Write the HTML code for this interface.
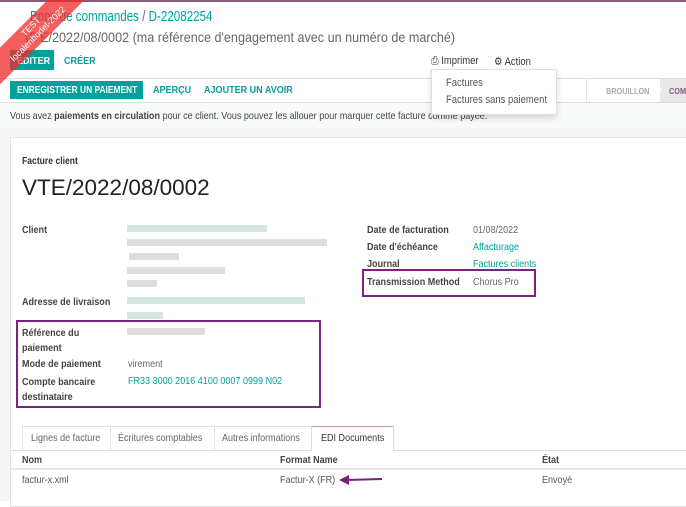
<!DOCTYPE html>
<html><head><meta charset="utf-8"><style>
*{margin:0;padding:0;box-sizing:border-box}
body{width:686px;height:501px;overflow:hidden;background:#fff;font-family:"Liberation Sans",sans-serif;color:#4c4c4c;position:relative;font-size:11px}
.a{position:absolute;white-space:nowrap}
.s{transform:scaleX(.86);transform-origin:0 0}
.t{color:#00A09D}
.b{font-weight:bold;color:#444}
.blur{position:absolute;height:7px;background:#c9dedd;opacity:.8}
.blg{position:absolute;height:7px;background:#ddd}
.btn{position:absolute;background:#00A09D}
</style></head><body>
<div class="a" style="left:0;top:0;width:686px;height:2px;background:#875A7B"></div>
<div class="a" style="left:30px;top:9px;font-size:14.5px;transform:scaleX(.8);transform-origin:0 0"><span class="t">Bons de commandes</span> <span style="color:#666">/</span> <span class="t">D-22082254</span></div>
<div class="a" style="left:24px;top:29px;font-size:14px;color:#666;transform:scaleX(.9);transform-origin:0 0">VTE/2022/08/0002 (ma référence d'engagement avec un numéro de marché)</div>
<div class="btn" style="left:10px;top:50px;width:44px;height:20px"></div>
<div class="a s" style="left:17px;top:55px;font-weight:bold;font-size:10.5px;color:#fff">EDITER</div>
<div class="a t s" style="left:64px;top:55px;font-weight:bold;font-size:10.5px">CRÉER</div>
<div class="a s" style="left:431px;top:55px;font-size:11px;color:#333">&#9113; Imprimer</div>
<div class="a s" style="left:494px;top:55px;font-size:11px;color:#333">&#9881; Action</div>
<div class="a" style="left:0;top:78px;width:686px;height:1px;background:#ddd"></div>
<div class="a" style="left:0;top:102px;width:686px;height:1px;background:#ddd"></div>
<div class="btn" style="left:10px;top:81px;width:133px;height:18px"></div>
<div class="a" style="left:17px;top:84px;font-weight:bold;font-size:10.5px;color:#fff;transform:scaleX(.8);transform-origin:0 0">ENREGISTRER UN PAIEMENT</div>
<div class="a t s" style="left:153px;top:84px;font-weight:bold;font-size:10.5px">APERÇU</div>
<div class="a t s" style="left:204px;top:84px;font-weight:bold;font-size:10.5px">AJOUTER UN AVOIR</div>
<div class="a" style="left:586px;top:79px;width:1px;height:23px;background:#e4e4e4"></div>
<div class="a s" style="left:606px;top:86px;font-size:8.5px;color:#aaa;font-weight:bold">BROUILLON</div>
<div class="a" style="left:660px;top:79px;width:30px;height:23px;background:#e9e9e9"></div>
<div class="a" style="left:652px;top:79px;width:0;height:0;border-top:11.5px solid transparent;border-bottom:11.5px solid transparent;border-left:10px solid #fff"></div>
<div class="a s" style="left:669px;top:86px;font-size:8.5px;color:#875A7B;font-weight:bold">COM</div>
<div class="a" style="left:0;top:103px;width:686px;height:25px;background:#f8fafa"></div>
<div class="a s" style="left:10px;top:110px;font-size:10.5px;color:#444">Vous avez <b>paiements en circulation</b> pour ce client. Vous pouvez les allouer pour marquer cette facture comme payée.</div>
<div class="a" style="left:431px;top:69px;width:126px;height:46px;background:#fff;border:1px solid #e0e0e0;box-shadow:0 3px 6px rgba(0,0,0,.15)"></div>
<div class="a s" style="left:446px;top:77px;font-size:11px;color:#555">Factures</div>
<div class="a s" style="left:446px;top:94px;font-size:11px;color:#555">Factures sans paiement</div>
<div class="a" style="left:0;top:128px;width:686px;height:373px;background:#f5f5f5"></div>
<div class="a" style="left:10px;top:137px;width:680px;height:370px;background:#fff;border:1px solid #e2e2e2"></div>
<div class="a b s" style="left:22px;top:156px;font-size:10px;color:#333">Facture client</div>
<div class="a" style="left:22px;top:175px;font-size:22.5px;color:#222">VTE/2022/08/0002</div>
<div class="a b s" style="left:22px;top:224px;font-size:10.5px">Client</div>
<div class="blur" style="left:127px;top:225px;width:140px"></div>
<div class="blg" style="left:127px;top:239px;width:200px"></div>
<div class="blg" style="left:129px;top:253px;width:50px"></div>
<div class="blg" style="left:127px;top:267px;width:98px"></div>
<div class="blg" style="left:127px;top:280px;width:30px"></div>
<div class="a b s" style="left:22px;top:296px;font-size:10.5px">Adresse de livraison</div>
<div class="blur" style="left:127px;top:297px;width:178px"></div>
<div class="blur" style="left:127px;top:312px;width:36px"></div>
<div class="a" style="left:16px;top:320px;width:305px;height:88px;border:2px solid #80207f"></div>
<div class="a b s" style="left:22px;top:326px;font-size:10.5px;line-height:15px">Référence du<br>paiement</div>
<div class="blg" style="left:127px;top:328px;width:78px"></div>
<div class="a b s" style="left:22px;top:358px;font-size:10.5px">Mode de paiement</div>
<div class="a s" style="left:128px;top:358px;font-size:10.5px;color:#666">virement</div>
<div class="a b s" style="left:22px;top:375px;font-size:10.5px;line-height:15px">Compte bancaire<br>destinataire</div>
<div class="a t s" style="left:128px;top:375px;font-size:10.5px">FR33 3000 2016 4100 0007 0999 N02</div>
<div class="a b s" style="left:367px;top:224px;font-size:10.5px">Date de facturation</div>
<div class="a s" style="left:473px;top:224px;font-size:10.5px;color:#666">01/08/2022</div>
<div class="a b s" style="left:367px;top:241px;font-size:10.5px">Date d'échéance</div>
<div class="a t s" style="left:473px;top:241px;font-size:10.5px">Affacturage</div>
<div class="a b s" style="left:367px;top:258px;font-size:10.5px">Journal</div>
<div class="a t s" style="left:473px;top:258px;font-size:10.5px">Factures clients</div>
<div class="a" style="left:362px;top:269px;width:174px;height:28px;border:2px solid #80207f"></div>
<div class="a b s" style="left:367px;top:276px;font-size:10.5px">Transmission Method</div>
<div class="a s" style="left:473px;top:276px;font-size:10.5px;color:#666">Chorus Pro</div>
<div class="a" style="left:10px;top:450px;width:680px;height:1px;background:#ddd"></div>
<div class="a" style="left:22px;top:426px;width:372px;height:25px;border:1px solid #e2e2e2;border-bottom:none"></div>
<div class="a" style="left:110px;top:426px;width:1px;height:24px;background:#e2e2e2"></div>
<div class="a" style="left:214px;top:426px;width:1px;height:24px;background:#e2e2e2"></div>
<div class="a" style="left:311px;top:426px;width:83px;height:25px;background:#fff;border:1px solid #ddd;border-top:1px solid #c9a;border-bottom:none"></div>
<div class="a s" style="left:31px;top:432px;font-size:10.5px;color:#666">Lignes de facture</div>
<div class="a s" style="left:118px;top:432px;font-size:10.5px;color:#666">Écritures comptables</div>
<div class="a s" style="left:222px;top:432px;font-size:10.5px;color:#666">Autres informations</div>
<div class="a s" style="left:321px;top:432px;font-size:10.5px;color:#333">EDI Documents</div>
<div class="a" style="left:10px;top:468px;width:680px;height:2px;background:#e6e6e6"></div>
<div class="a b s" style="left:22px;top:454px;font-size:10.5px">Nom</div>
<div class="a b s" style="left:280px;top:454px;font-size:10.5px">Format Name</div>
<div class="a b s" style="left:542px;top:454px;font-size:10.5px">État</div>
<div class="a s" style="left:22px;top:474px;font-size:10.5px;color:#555">factur-x.xml</div>
<div class="a s" style="left:280px;top:474px;font-size:10.5px;color:#555">Factur-X (FR)</div>
<div class="a s" style="left:542px;top:474px;font-size:10.5px;color:#555">Envoyé</div>
<svg class="a" style="left:338px;top:474px" width="46" height="12"><line x1="8" y1="6" x2="44" y2="5" stroke="#7a1f7f" stroke-width="2"/><polygon points="1,6 11,1 11,11" fill="#7a1f7f"/></svg>
<div class="a" style="left:-30px;top:18px;width:130px;height:26px;background:rgba(240,40,40,.75);transform:rotate(-45deg);color:#fff;font-size:9px;line-height:10px;text-align:center;padding-top:2px">TEST<br>localenbodel-2022</div>
</body></html>
